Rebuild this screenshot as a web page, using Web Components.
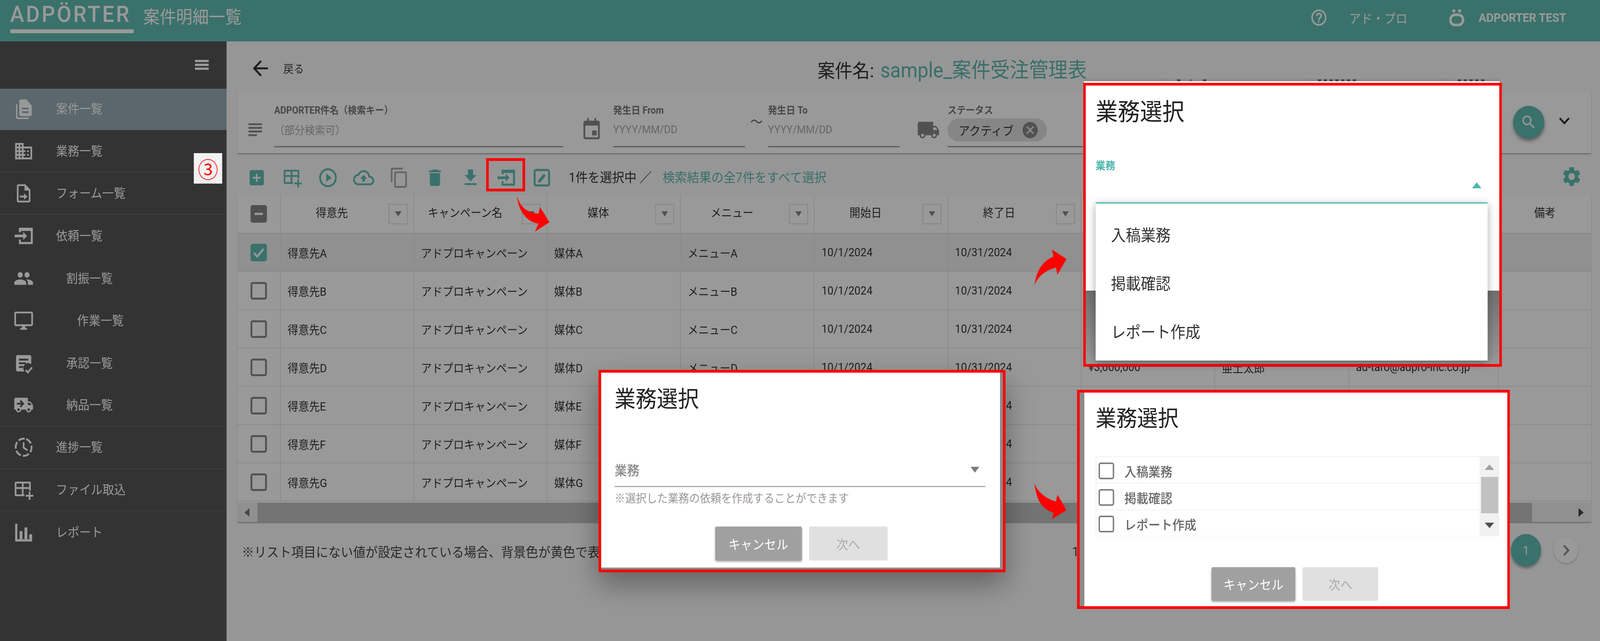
<!DOCTYPE html>
<html lang="ja"><head><meta charset="utf-8"><title>案件明細一覧</title>
<style>
html,body{margin:0;padding:0;overflow:hidden;width:100%;height:100%}
body{background:#fafafa;font-family:Roboto,"Noto Sans CJK JP",sans-serif;color:#3a3a3a;font-weight:400}
app-body{display:flex;height:1535px}
</style></head><body>
<page-stage>
<app-header></app-header>
<app-body>
  <side-nav></side-nav>
  <main-panel></main-panel>
</app-body>
<page-scrim></page-scrim>

<clip-strip></clip-strip>
<dialog-frame x="1646" y="947" w="1119" h="518" inset="0 8 5 0" shadow="1">
  <div slot="title" style="padding-top:32px;font-size:58px;line-height:72px;color:#222">業務選択</div>
  <closed-field></closed-field>
  <dialog-actions slot="actions" top="394" cw="238" nw="216" h="87"></dialog-actions>
</dialog-frame>
<dialog-frame x="2979" y="212" w="1151" h="727" inset="0 0 0 0" sheeth="525" pad="27">
  <div slot="title" style="padding-top:30px;font-size:61px;line-height:76px;color:#222">業務選択</div>
  <open-field></open-field>
</dialog-frame>
<dialog-frame x="2962" y="998" w="1190" h="561" inset="0 0 0 13" pad="31">
  <div slot="title" style="padding-top:31px;font-size:57px;line-height:72px;color:#222">業務選択</div>
  <check-list></check-list>
  <dialog-actions slot="actions" top="447" cw="230" nw="208" h="86" shift="4"></dialog-actions>
</dialog-frame>
<anno-layer></anno-layer>
</page-stage>

<script>
const P=(d)=>`<path d="${d}"/>`;
const ICONS={
docs:`<path d="M14.5 1.5H8.6c-1 0-1.8.8-1.8 1.8L6.8 18c0 1 .8 1.8 1.8 1.8h11.2c1 0 1.8-.8 1.8-1.8V8.2l-6.3-6.7zM18 16.4H10V14.6h8v1.8zm0-4H10v-1.8h8v1.8z"/><path d="M4.6 6.5H3v14.3C3 22 4 23 5.2 23h13v-1.7H5.4c-.4 0-.8-.3-.8-.8V6.5z"/>`,
domain:P("M12 7V3H2v18h20V7H12zM6 19H4v-2h2v2zm0-4H4v-2h2v2zm0-4H4V9h2v2zm0-4H4V5h2v2zm4 12H8v-2h2v2zm0-4H8v-2h2v2zm0-4H8V9h2v2zm0-4H8V5h2v2zm10 12h-8v-2h2v-2h-2v-2h2v-2h-2V9h8v10zm-2-8h-2v2h2v-2zm0 4h-2v2h2v-2z"),
formin:P("M14 2H6c-1.1 0-1.99.9-1.99 2L4 20c0 1.1.89 2 1.99 2H18c1.1 0 2-.9 2-2V8l-6-6zM6 20V4h7v5h5v11H6z")+P("M7.5 14.5h5v-2.6l4 3.6-4 3.6v-2.6h-5z"),
input:`<path d="M7.6 8V4.2h14v15.6h-14V16" fill="none" stroke="currentColor" stroke-width="2.3"/><path d="M6.5 3h16v3.5h-16z"/><path d="M11.5 16.5l4.5-4.5-4.5-4.5v3H1.5v3h10z"/>`,
people:P("M16 11c1.66 0 2.99-1.34 2.99-3S17.66 5 16 5c-1.66 0-3 1.34-3 3s1.34 3 3 3zm-8 0c1.66 0 2.99-1.34 2.99-3S9.66 5 8 5C6.34 5 5 6.34 5 8s1.34 3 3 3zm0 2c-2.33 0-7 1.17-7 3.5V19h14v-2.5c0-2.33-4.67-3.5-7-3.5zm8 0c-.29 0-.62.02-.97.05 1.16.84 1.97 1.97 1.97 3.45V19h6v-2.5c0-2.33-4.67-3.5-7-3.5z"),
desktop:P("M21 2H3c-1.1 0-2 .9-2 2v12c0 1.1.9 2 2 2h7v2H8v2h8v-2h-2v-2h7c1.1 0 2-.9 2-2V4c0-1.1-.9-2-2-2zm0 14H3V4h18v12z"),
approve:`<path d="M5 3h14a2 2 0 0 1 2 2v8.2a5.6 5.6 0 0 0-8 7.8H5a2 2 0 0 1-2-2V5a2 2 0 0 1 2-2z"/><path d="M6.5 8h11M6.5 12h8M6.5 16h5" stroke="#555" stroke-width="2" fill="none"/><path d="M14.5 19.5l2.5 2.5 5-5.5" fill="none" stroke="currentColor" stroke-width="2"/>`,
truckgo:P("M20 8h-3V4H3c-1.1 0-2 .9-2 2v11h2c0 1.66 1.34 3 3 3s3-1.34 3-3h6c0 1.66 1.34 3 3 3s3-1.34 3-3h2v-5l-3-4zM6 18.5c-.83 0-1.5-.67-1.5-1.5s.67-1.5 1.5-1.5 1.5.67 1.5 1.5-.67 1.5-1.5 1.5zm13.5-9l1.96 2.5H17V9.5h2.5zm-1.5 9c-.83 0-1.5-.67-1.5-1.5s.67-1.5 1.5-1.5 1.5.67 1.5 1.5-.67 1.5-1.5 1.5z")+`<path d="M4 10.5h6.5M8 7l3.5 3.5L8 14" fill="none" stroke="#555" stroke-width="2"/>`,
progress:`<circle cx="12" cy="12" r="9.4" fill="none" stroke="currentColor" stroke-width="2.2" stroke-dasharray="7.5 2.4" transform="rotate(-72 12 12)"/><path d="M12 6.5v6l4.6 2.8" fill="none" stroke="currentColor" stroke-width="2"/>`,
tableplus:`<path d="M3 3h16a1.5 1.5 0 0 1 1.5 1.5V13h-2V11h-6.6v6H13v2H3a1.5 1.5 0 0 1-1.5-1.5v-13A1.5 1.5 0 0 1 3 3zm.5 2v4h6.4V5H3.5zm8.4 0v4h6.6V5h-6.6zM3.5 11v6h6.4v-6H3.5z"/><path d="M18 14h2v3.5h3.5v2H20V23h-2v-3.5h-3.5v-2H18z"/>`,
chart:P("M2 2.5h2.6v17H22V22H2z")+P("M7.2 10.5h3.4v9H7.2zM13 6.5h3.4v13H13zM18.6 14H22v5.5h-3.4z"),
subject:P("M14 17H4v2h10v-2zm6-8H4v2h16V9zM4 15h16v-2H4v2zM4 5v2h16V5H4z"),
event:`<path d="M7 1.5h2V4h6V1.5h2V4h2a2 2 0 0 1 2 2v15a2 2 0 0 1-2 2H5a2 2 0 0 1-2-2V6a2 2 0 0 1 2-2h2zM5 9v12h14V9z"/><path d="M12.5 14h5v5h-5z"/>`,
truck:P("M20 8h-3V4H3c-1.1 0-2 .9-2 2v11h2c0 1.66 1.34 3 3 3s3-1.34 3-3h6c0 1.66 1.34 3 3 3s3-1.34 3-3h2v-5l-3-4zM6 18.5c-.83 0-1.5-.67-1.5-1.5s.67-1.5 1.5-1.5 1.5.67 1.5 1.5-.67 1.5-1.5 1.5zm13.5-9l1.96 2.5H17V9.5h2.5zm-1.5 9c-.83 0-1.5-.67-1.5-1.5s.67-1.5 1.5-1.5 1.5.67 1.5 1.5-.67 1.5-1.5 1.5z"),
back:P("M20 11H7.83l5.59-5.59L12 4l-8 8 8 8 1.41-1.41L7.83 13H20v-2z"),
search:P("M15.5 14h-.79l-.28-.27C15.41 12.59 16 11.11 16 9.5 16 5.91 13.09 3 9.5 3S3 5.91 3 9.5 5.91 16 9.5 16c1.61 0 3.09-.59 4.23-1.57l.27.28v.79l5 4.99L20.49 19l-4.99-5zm-6 0C7.01 14 5 11.99 5 9.5S7.01 5 9.5 5 14 7.01 14 9.5 11.99 14 9.5 14z"),
expand:P("M16.59 8.59L12 13.17 7.41 8.59 6 10l6 6 6-6z"),
gear:P("M19.14 12.94c.04-.3.06-.61.06-.94 0-.32-.02-.64-.07-.94l2.03-1.58c.18-.14.23-.41.12-.61l-1.92-3.32c-.12-.22-.37-.29-.59-.22l-2.39.96c-.5-.38-1.03-.7-1.62-.94l-.36-2.54c-.04-.24-.24-.41-.48-.41h-3.84c-.24 0-.43.17-.47.41l-.36 2.54c-.59.24-1.13.57-1.62.94l-2.39-.96c-.22-.08-.47 0-.59.22L2.74 8.87c-.12.21-.08.47.12.61l2.03 1.58c-.05.3-.09.63-.09.94s.02.64.07.94l-2.03 1.58c-.18.14-.23.41-.12.61l1.92 3.32c.12.22.37.29.59.22l2.39-.96c.5.38 1.03.7 1.62.94l.36 2.54c.05.24.24.41.48.41h3.84c.24 0 .44-.17.47-.41l.36-2.54c.59-.24 1.13-.56 1.62-.94l2.39.96c.22.08.47 0 .59-.22l1.92-3.32c.12-.22.07-.47-.12-.61l-2.01-1.58zM12 15.6c-1.98 0-3.6-1.62-3.6-3.6s1.62-3.6 3.6-3.6 3.6 1.62 3.6 3.6-1.62 3.6-3.6 3.6z"),
cancel:P("M12 2C6.47 2 2 6.47 2 12s4.47 10 10 10 10-4.47 10-10S17.53 2 12 2zm5 13.59L15.59 17 12 13.41 8.41 17 7 15.59 10.59 12 7 8.41 8.41 7 12 10.59 15.59 7 17 8.41 13.41 12 17 15.59z"),
addbox:P("M19 3H5c-1.1 0-2 .9-2 2v14c0 1.1.9 2 2 2h14c1.1 0 2-.9 2-2V5c0-1.1-.9-2-2-2zm-2 10h-4v4h-2v-4H7v-2h4V7h2v4h4v2z"),
play:P("M10 16.5l6-4.5-6-4.5v9zM12 2C6.48 2 2 6.48 2 12s4.48 10 10 10 10-4.48 10-10S17.52 2 12 2zm0 18c-4.41 0-8-3.59-8-8s3.59-8 8-8 8 3.59 8 8-3.59 8-8 8z"),
cloud:P("M19.35 10.04C18.67 6.59 15.64 4 12 4 9.11 4 6.6 5.64 5.35 8.04 2.34 8.36 0 10.91 0 14c0 3.31 2.69 6 6 6h13c2.76 0 5-2.24 5-5 0-2.64-2.05-4.78-4.65-4.96zM19 18H6c-2.21 0-4-1.79-4-4 0-2.05 1.53-3.76 3.56-3.97l1.07-.11.5-.95C8.08 7.14 9.94 6 12 6c2.62 0 4.88 1.86 5.39 4.43l.3 1.5 1.53.11c1.56.1 2.78 1.41 2.78 2.96 0 1.65-1.35 3-3 3zM8 13h2.55v3h2.9v-3H16l-4-4z"),
copy:P("M16 1H4c-1.1 0-2 .9-2 2v14h2V3h12V1zm3 4H8c-1.1 0-2 .9-2 2v14c0 1.1.9 2 2 2h11c1.1 0 2-.9 2-2V7c0-1.1-.9-2-2-2zm0 16H8V7h11v14z"),
trash:P("M6 19c0 1.1.9 2 2 2h8c1.1 0 2-.9 2-2V7H6v12zM19 4h-3.5l-1-1h-5l-1 1H5v2h14V4z"),
download:P("M19 9h-4V3H9v6H5l7 7 7-7zM5 18v2h14v-2H5z"),
editbox:`<rect x="3.2" y="3.2" width="17.6" height="17.6" rx="1.6" fill="none" stroke="currentColor" stroke-width="2.4"/><path d="M7.5 17.8l.4-3.2 6.4-7.2 2.6 2.3-6.4 7.2z"/>`,
help:P("M11 18h2v-2h-2v2zm1-16C6.48 2 2 6.48 2 12s4.48 10 10 10 10-4.48 10-10S17.52 2 12 2zm0 18c-4.41 0-8-3.59-8-8s3.59-8 8-8 8 3.59 8 8-3.59 8-8 8zm0-14c-2.21 0-4 1.79-4 4h2c0-1.1.9-2 2-2s2 .9 2 2c0 2-3 1.75-3 5h2c0-2.25 3-2.5 3-5 0-2.21-1.79-4-4-4z"),
face:`<circle cx="8" cy="3.4" r="2.2"/><circle cx="16" cy="3.4" r="2.2"/><rect x="3.4" y="8.4" width="17.2" height="13" rx="6" fill="none" stroke="currentColor" stroke-width="3.4"/>`,
next:P("M10 6L8.59 7.41 13.17 12l-4.58 4.59L10 18l6-6z"),
menu:P("M3 5h18v3.2H3zM3 10.4h18v3.2H3zM3 15.8h18V19H3z")
};
function def(tag,css,html,after){
  customElements.define(tag,class extends HTMLElement{
    connectedCallback(){
      if(this.shadowRoot)return;
      const r=this.attachShadow({mode:'open'});
      r.innerHTML=`<style>${css}</style>${typeof html==='function'?html(this):html}`;
      if(after)after(this,r);
    }
  });
}
const attr=(e,n,d)=>e.hasAttribute(n)?e.getAttribute(n):d;

/* The layout is written in the reference's 4400px grid; the stage fits that grid to whatever width the window really has. */
def('page-stage',`:host{display:block;position:relative;width:4400px;height:1641px;overflow:hidden;transform-origin:0 0}`,`<slot></slot>`,
 e=>{const fit=()=>{e.style.transform=`scaleX(${document.documentElement.clientWidth/4400})`};fit();addEventListener('resize',fit);});

def('ad-icon',`:host{display:inline-flex;flex:none}svg{width:100%;height:100%;display:block;fill:currentColor}`,
 e=>`<svg viewBox="0 0 24 24" aria-hidden="true">${ICONS[attr(e,'name','menu')]}</svg>`,
 e=>{const s=attr(e,'size','55');e.style.width=attr(e,'w',s)+'px';e.style.height=attr(e,'h',s)+'px';});

/* ---------- header ---------- */
def('app-header',`
:host{display:flex;align-items:flex-start;height:106px;background:#62bcb2;color:#fff;box-sizing:border-box;padding-left:28px}
.logo{width:340px}
.word{display:block;font-size:58px;line-height:58px;padding-top:7px;letter-spacing:5px;font-weight:500;white-space:nowrap;height:63px;color:#fff}
.bar{display:block;height:10px;border-radius:3px;background:#fff;margin-top:5px}
.title{font-size:45px;line-height:56px;margin:17px 0 0 26px}
.right{margin-left:auto;display:flex;align-items:center;height:90px;padding-right:93px}
.right ad-icon{color:#fff}
.who{font-size:32px;margin-left:58px;margin-right:112px}
.acct{font-size:31.5px;font-weight:700;margin-left:36px;letter-spacing:-.2px}
`,`<div class="logo"><span class="word">ADPÖRTER</span><span class="bar"></span></div>
<div class="title">案件明細一覧</div>
<div class="right"><ad-icon name="help" size="50"></ad-icon><span class="who">アド・プロ</span><ad-icon name="face" size="48"></ad-icon><span class="acct">ADPORTER TEST</span></div>`);

/* ---------- sidebar ---------- */
def('side-item',`
:host{display:flex;align-items:center;height:108.4px;box-sizing:border-box;color:#fff;font-size:32px;padding-left:37px}
:host([line]){border-bottom:2px solid #666}
:host([active]){background:#96acb6;box-shadow:inset 0 2px 0 #4d4d4d}
span{display:block;padding-bottom:6px}
`,e=>`<ad-icon name="${attr(e,'icon','docs')}" size="56"></ad-icon><span style="margin-left:${attr(e,'gap','61')}px">${attr(e,'label','')}</span>`);
def('side-nav',`
:host{display:block;width:623px;flex:none;background:#555;height:100%}
.top{height:119px;display:flex;justify-content:flex-end;align-items:flex-start;padding:38px 43px 0 0;box-sizing:border-box;color:#fff}
`,`<div class="top"><ad-icon name="menu" w="50" h="44" style="transform:scaleX(1.15)"></ad-icon></div>
<side-item active icon="docs" label="案件一覧"></side-item>
<side-item line icon="domain" label="業務一覧"></side-item>
<side-item line icon="formin" label="フォーム一覧"></side-item>
<side-item icon="input" label="依頼一覧"></side-item>
<side-item icon="people" label="割振一覧" gap="89"></side-item>
<side-item icon="desktop" label="作業一覧" gap="119"></side-item>
<side-item icon="approve" label="承認一覧" gap="89"></side-item>
<side-item line icon="truckgo" label="納品一覧" gap="89"></side-item>
<side-item line icon="progress" label="進捗一覧"></side-item>
<side-item line icon="tableplus" label="ファイル取込"></side-item>
<side-item icon="chart" label="レポート"></side-item>`);

/* ---------- main ---------- */
def('back-row',`
:host{display:flex;align-items:center;height:129px;box-sizing:border-box;padding:8px 0 0 32px}
ad-icon{color:#333}
.b{font-size:28.5px;margin-left:32px;color:#444}
h1{margin:0 0 0 1412px;font-weight:400;display:flex;align-items:baseline;white-space:nowrap}
.k{font-size:48px;color:#333}.v{font-size:53px;color:#5fb9ad;margin-left:17px}
`,`<ad-icon name="back" size="62"></ad-icon><span class="b">戻る</span><h1><span class="k">案件名:</span><span class="v">sample_案件受注管理表</span></h1>`);

def('filter-field',`
:host{display:block;flex:none}
label{display:block;font-size:25px;line-height:32px;font-weight:700;color:#777;white-space:nowrap}
.v{height:65px;padding-bottom:10px;display:flex;align-items:center;border-bottom:3px solid #999;font-size:28px;color:#aaa;white-space:nowrap}
`,e=>`<label>${attr(e,'label','')}</label><div class="v"><slot>${attr(e,'ph','')}</slot></div>`,
 e=>{e.style.width=attr(e,'w','363')+'px'});
def('status-chip',`
:host{display:inline-flex;align-items:center;height:59px;width:273px;box-sizing:border-box;border-radius:30px;background:#e0e0e0;font-size:31px;color:#333;padding-left:30px;margin-top:2px}
ad-icon{margin-left:20px;color:#888}
`,`アクティブ<ad-icon name="cancel" size="50"></ad-icon>`);
def('filter-card',`
:host{display:flex;align-items:flex-start;height:157px;box-sizing:border-box;background:#fff;padding:32px 0 0 21px;box-shadow:0 3px 3px rgba(0,0,0,.3);color:#888}
.tilde{flex:none;width:63px;text-align:center;font-size:34px;line-height:34px;margin-top:28px;color:#555}
button{all:unset;flex:none;width:86px;height:84px;border-radius:50%;background:#62bcb2;color:#fff;display:flex;align-items:center;justify-content:center;margin:4px 0 0 31px;box-shadow:0 6px 10px rgba(0,0,0,.4)}
.chev{color:#333;margin:13px 0 0 26px}
`,`<ad-icon name="subject" size="56" style="margin:37px 24px 0 0"></ad-icon>
<filter-field w="795" label="ADPORTER件名（検索キー）" ph="（部分検索可）"></filter-field>
<ad-icon name="event" size="60" style="margin:32px 29px 0 48px"></ad-icon>
<filter-field label="発生日 From" ph="YYYY/MM/DD"></filter-field>
<span class="tilde">～</span>
<filter-field w="362" label="発生日 To" ph="YYYY/MM/DD"></filter-field>
<ad-icon name="truck" size="64" style="margin:34px 21px 0 47px"></ad-icon>
<filter-field w="1524" label="ステータス"><status-chip></status-chip></filter-field>
<button aria-label="検索"><ad-icon name="search" size="46"></ad-icon></button>
<ad-icon class="chev" name="expand" size="58"></ad-icon>`);

def('result-toolbar',`
:host{display:flex;align-items:center;height:107px;box-sizing:border-box;padding:18px 0 0 4px;color:#62bcb2;white-space:nowrap}
.b{flex:none;width:98px;display:flex;justify-content:center}
.c{color:#aaa}
.n{font-size:33.5px;color:#333;margin-left:25px;padding-bottom:6px}
.l{font-size:33.5px;color:#5fb9ad;margin-left:30px;padding-bottom:6px}
.g{margin-left:auto;margin-right:24px;margin-bottom:6px}
`,`<span class="b"><ad-icon name="addbox" size="52"></ad-icon></span>
<span class="b"><ad-icon name="tableplus" size="54"></ad-icon></span>
<span class="b"><ad-icon name="play" size="58"></ad-icon></span>
<span class="b"><ad-icon name="cloud" size="58"></ad-icon></span>
<span class="b c"><ad-icon name="copy" size="56"></ad-icon></span>
<span class="b"><ad-icon name="trash" size="56"></ad-icon></span>
<span class="b"><ad-icon name="download" size="56"></ad-icon></span>
<span class="b"><ad-icon name="input" size="54"></ad-icon></span>
<span class="b"><ad-icon name="editbox" size="54"></ad-icon></span>
<span class="n">1件を選択中 ／</span><span class="l">検索結果の全7件をすべて選択</span>
<ad-icon class="g" name="gear" size="60"></ad-icon>`);

def('check-box',`
:host{display:inline-block;width:45px;height:45px;box-sizing:border-box;border:5px solid #888;border-radius:6px;position:relative;vertical-align:middle}
:host([on]){background:#62bcb2;border-color:#62bcb2}
:host([mixed]){background:#858585;border-color:#858585}
svg{position:absolute;inset:-5px;width:45px;height:45px}
`,e=>e.hasAttribute('on')?`<svg viewBox="0 0 24 24"><path d="M5 12.5l4.8 5L19 7" fill="none" stroke="#fff" stroke-width="2.6"/></svg>`:e.hasAttribute('mixed')?`<svg viewBox="0 0 24 24"><path d="M6 12h12" stroke="#fff" stroke-width="3"/></svg>`:'');

def('col-head',`
:host{display:flex;align-items:center;height:100%}
span{flex:1;text-align:center;font-size:29.5px;padding-bottom:12px;color:#333;white-space:nowrap}
i{flex:none;width:52px;height:52px;box-sizing:border-box;border:2px solid #ddd;margin:0 16px;display:flex;align-items:center;justify-content:center}
i::before{content:"";border:9px solid transparent;border-top:13px solid #888;border-bottom:0}
`,e=>`<span>${attr(e,'label','')}</span>${e.hasAttribute('plain')?'':'<i></i>'}`);

def('data-table',`
:host{display:block;background:#fff;box-shadow:0 3px 3px rgba(0,0,0,.3);width:3723px}
table{border-collapse:collapse;table-layout:fixed;width:3723px}
th,td{box-sizing:border-box;height:98px;border-right:2px solid #e6e6e6;border-bottom:2px solid #e6e6e6;padding:0;font-weight:400;font-size:29.5px;color:#333;white-space:nowrap;overflow:hidden}
td{padding-left:19px}
td.c,th.c{text-align:center;padding:0}
th:last-child,td:last-child{border-right:0}
tr.sel td{background:#f0f0f0}
.sb{display:flex;align-items:center;height:49px;margin-top:3px;background:#f1f1f1;position:relative}
.tl{border:11px solid transparent;border-left:0;border-right:14px solid #777;margin-left:19px}
.th{margin-left:22px;width:3505px;height:49px;background:#c1c1c1}
.tr{border:11px solid transparent;border-right:0;border-left:14px solid #444;margin-left:128px}
`,()=>{
 const w=[118,367,366,367,368,367,367,367,369,411,256];
 const cols=['得意先','キャンペーン名','媒体','メニュー','開始日','終了日','金額','担当者','メールアドレス'];
 let h=`<table><colgroup>${w.map(x=>`<col style="width:${x}px">`).join('')}</colgroup><thead><tr><th class="c"><check-box mixed></check-box></th>`;
 h+=cols.map(c=>`<th><col-head label="${c}"></col-head></th>`).join('')+`<th><col-head plain label="備考"></col-head></th></tr></thead><tbody>`;
 'ABCDEFG'.split('').forEach((L,i)=>{
  const covered=i>3; /* these two cells lie wholly under the centre dialog */
  h+=`<tr class="${i==0?'sel':''}"><td class="c"><check-box ${i==0?'on':''}></check-box></td><td>得意先${L}</td><td>アドプロキャンペーン</td><td>媒体${L}</td><td>${covered?'':'メニュー'+L}</td><td>${covered?'':'10/1/2024'}</td><td>10/31/2024</td>`;
  h+=L=='D'?`<td>¥3,000,000</td><td>亜土太郎</td><td>ad-taro@adpro-inc.co.jp</td><td></td>`:`<td></td><td></td><td></td><td></td>`;
  h+=`</tr>`;
 });
 return h+`</tbody></table><div class="sb"><span class="tl"></span><span class="th"></span><span class="tr"></span></div>`;
});

def('list-footer',`
:host{display:flex;align-items:center;height:83px;margin-top:31px;font-size:34px;color:#444;white-space:nowrap}
.n{width:2283px;margin-left:12px;flex:none;overflow:hidden;padding-top:6px}
.m{padding-top:6px}
.p{margin-left:auto;margin-right:36px;display:flex;align-items:center;gap:35px}
.a{width:83px;height:83px;border-radius:50%;background:#62bcb2;color:#fff;display:flex;align-items:center;justify-content:center;box-shadow:0 5px 8px rgba(0,0,0,.35);font-size:32px}
.b{width:67px;height:67px;border-radius:50%;background:#fff;color:#888;display:flex;align-items:center;justify-content:center;box-shadow:0 2px 4px rgba(0,0,0,.25)}
`,`<span class="n">※リスト項目にない値が設定されている場合、背景色が黄色で表示されます</span><span class="m">1/1</span>
<span class="p"><span class="a">1</span><span class="b"><ad-icon name="next" size="56"></ad-icon></span></span>`);

def('main-panel',`
:host{display:block;flex:1;min-width:0;padding:0 24px 0 30px;box-sizing:border-box}
`,`<back-row></back-row><filter-card></filter-card><result-toolbar></result-toolbar><data-table></data-table><list-footer></list-footer>`);

/* ---------- overlay ---------- */
def('page-scrim',`:host{position:absolute;inset:0;background:rgba(0,0,0,.4)}`,``);

def('clip-strip',`
:host{position:absolute;left:2981px;top:201px;width:1143px;height:11px;background:#fff;overflow:hidden}
.s{height:7px;background:#8c8c8c;display:flex;overflow:hidden}
.s span{flex:none;height:7px;border-right:2px solid #7a7a7a;box-sizing:border-box;display:flex;gap:7px;padding-left:32px;align-items:flex-end}
.s b{display:block;width:9px;height:5px;background:#444}
`,`<div class="s"><span style="width:224px"></span><span style="width:387px"><b></b><b style="margin-left:20px;width:3px"></b><b style="margin-left:25px"></b></span><span style="width:385px"><b></b><b></b><b></b><b></b><b></b><b></b><b></b></span><span style="width:147px;border:0"><b></b><b></b><b></b><b></b><b></b></span></div>`);

def('dialog-frame',`
:host{position:absolute;box-sizing:border-box;border:7px solid #f00;background:#8a8a8a;display:block}
.in{position:absolute;background:#fff}
.pad{position:absolute;inset:0;box-sizing:border-box}
.shade{position:absolute;left:0;right:0;bottom:0;background:linear-gradient(#6f6f6f,#999)}
::slotted(dialog-actions){position:absolute;left:0;right:0}
`,e=>{
 const [t,r,b,l]=attr(e,'inset','0 0 0 0').split(' ');
 const sh=attr(e,'sheeth','');
 return `${sh?`<div class="shade" style="top:${sh}px"></div>`:''}
 <div class="in" style="top:${t}px;right:${r}px;left:${l}px;${sh?`height:${sh}px`:`bottom:${b}px`}"></div>
 <div class="pad" style="left:${+l}px;right:${r}px;top:${t}px;padding-left:${attr(e,'pad','37')}px;padding-right:${attr(e,'pad','37')}px"><slot name="title"></slot><slot></slot></div>
 <slot name="actions"></slot>`;
},e=>{
 e.style.left=attr(e,'x')+'px';e.style.top=attr(e,'y')+'px';e.style.width=attr(e,'w')+'px';e.style.height=attr(e,'h')+'px';
 if(e.hasAttribute('shadow'))e.style.boxShadow='0 30px 70px rgba(0,0,0,.35)';
});

def('closed-field',`
:host{display:block;margin-top:103px;margin-right:3px}
.row{display:flex;align-items:center;justify-content:space-between;height:86px;border-bottom:3px solid #aaa;box-sizing:border-box;font-size:34px;font-weight:500;color:#888}
.row i{border:12px solid transparent;border-top:15px solid #7c7c7c;border-bottom:0;margin-right:17px}
.h{font-size:29.3px;color:#999;margin-top:11px;line-height:36px}
`,`<div class="row"><span>業務</span><i></i></div><div class="h">※選択した業務の依頼を作成することができます</div>`);

def('open-field',`
:host{display:block;position:relative;margin-top:83px}
.l{font-size:27px;font-weight:700;line-height:34px;color:#4db6ac}
.a{display:flex;justify-content:flex-end;align-items:flex-start;height:62px;box-sizing:border-box;padding:25px 17px 0 0;width:1078px}
.a i{display:block;width:0;height:0;border:13px solid transparent;border-bottom:15px solid #4db6ac;border-top:0}
.m{position:absolute;left:0;top:110px;width:1078px;height:405px;background:#fff;border-top:3px solid #4db6ac;box-sizing:border-box;box-shadow:0 6px 22px rgba(0,0,0,.35);font-size:41px;color:#333;padding:0 0 0 42px}
.m div{height:124px;line-height:124px}
.m div:first-child{margin-top:20px}
`,`<div class="l">業務</div><div class="a"><i></i></div>
<div class="m"><div>入稿業務</div><div>掲載確認</div><div>レポート作成</div></div>`);

def('check-list',`
:host{display:block;margin-top:60px;position:relative;width:1110px;height:205px;background:#f1f1f1;box-sizing:border-box;margin-left:0}
.r{position:absolute;left:2px;width:1054px;height:66px;background:#fff;display:flex;align-items:center;font-size:33px;font-weight:500;color:#666;box-sizing:border-box;padding-top:5px}
check-box{width:43px;height:43px;border-color:#808080;margin:0 28px 0 6px;border-width:4px}
.s{position:absolute;right:0;top:0;width:54px;height:205px}
.u{position:absolute;left:14px;top:21px;border:13px solid transparent;border-bottom:14px solid #a0a0a0;border-top:0}
.t{position:absolute;left:4px;top:53px;width:47px;height:93px;background:#c1c1c1}
.d{position:absolute;left:14px;top:170px;border:13px solid transparent;border-top:14px solid #505050;border-bottom:0}
`,`<div class="r" style="top:2px"><check-box></check-box>入稿業務</div>
<div class="r" style="top:70px"><check-box></check-box>掲載確認</div>
<div class="r" style="top:138px"><check-box></check-box>レポート作成</div>
<div class="s"><i class="u"></i><i class="t"></i><i class="d"></i></div>`);

def('dialog-actions',`
:host{display:flex;justify-content:center;gap:20px;font-size:33px}
button{all:unset;display:flex;align-items:center;justify-content:center;border-radius:4px;box-sizing:border-box}
.c{background:#a0a0a0;color:#fff;box-shadow:0 3px 5px rgba(0,0,0,.35)}
.n{background:#e0e0e0;color:#aaa}
`,e=>`<button class="c" style="width:${attr(e,'cw')}px;height:${attr(e,'h')}px">キャンセル</button><button class="n" style="width:${attr(e,'nw')}px;height:${attr(e,'h')}px">次へ</button>`,
e=>{e.style.top=attr(e,'top')+'px';e.style.transform=`translateX(${attr(e,'shift','-2')}px)`;});

def('anno-layer',`
:host{position:absolute;inset:0;pointer-events:none}
svg{position:absolute;inset:0;width:4400px;height:1641px}
.badge{position:absolute;left:533px;top:392px;width:78px;height:78px;background:#f2f2f2;color:#f00;font-size:56px;line-height:78px;text-align:center;font-family:"Noto Sans CJK JP",sans-serif}
.box{position:absolute;left:1337px;top:405px;width:107px;height:85px;border:7px solid #f00;box-sizing:border-box}
`,`<div class="badge">③</div><div class="box"></div>
<svg viewBox="0 0 4400 1641" fill="#f00" aria-hidden="true">
<path d="M1422,502 C1432,535 1455,545 1481,547 L1485,530 L1511,569 L1471,593 L1481,572 C1450,570 1425,540 1422,502Z"/>
<path d="M2845,730 C2850,690 2870,667 2897,657 L2893,639 L2933,663 L2908,703 L2904,685 C2880,690 2855,705 2845,730Z"/>
<path d="M2845,1238 C2855,1262 2880,1278 2904,1284 L2908,1266 L2933,1306 L2893,1329 L2897,1313 C2870,1305 2850,1285 2845,1238Z"/>
</svg>`);
customElements.define('app-body',class extends HTMLElement{});
</script>
</body></html>
